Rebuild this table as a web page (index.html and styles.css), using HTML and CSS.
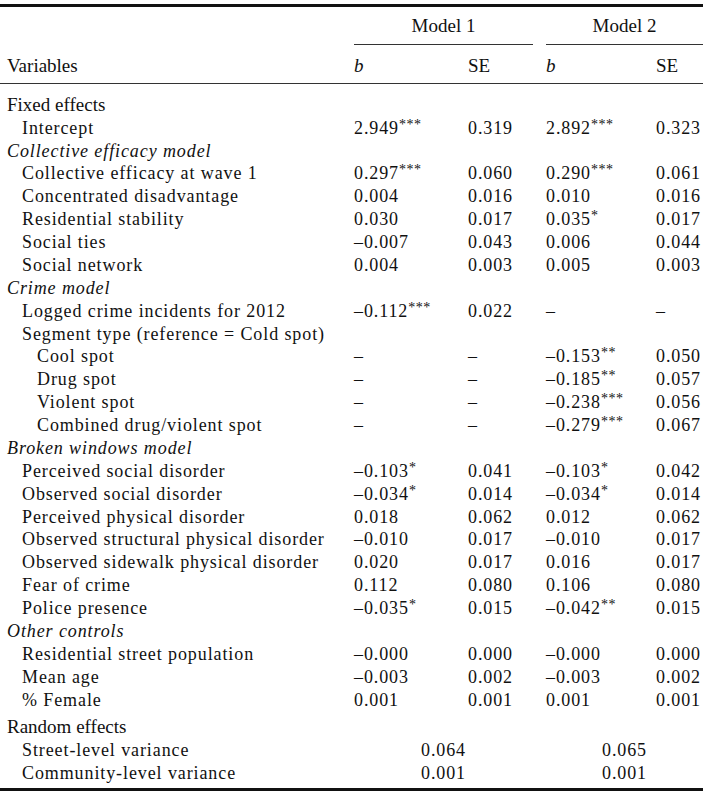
FILE: index.html
```html
<!DOCTYPE html>
<html lang="en">
<head>
    <meta charset="UTF-8">
    <meta name="viewport" content="width=device-width, initial-scale=1.0">
    <title>Multilevel models</title>
    <link rel="stylesheet" href="styles.css">
</head>
<body>
    <table class="results">
        <colgroup>
            <col class="c-var">
            <col class="c-b1">
            <col class="c-se1">
            <col class="c-b2">
            <col class="c-se2">
        </colgroup>
        <thead>
            <tr class="models">
                <th></th>
                <th colspan="2" class="m1"><div class="span-line">Model 1</div></th>
                <th colspan="2" class="m2"><div class="span-line">Model 2</div></th>
            </tr>
            <tr class="heads">
                <th class="var">Variables</th>
                <th><i>b</i></th>
                <th>SE</th>
                <th><i>b</i></th>
                <th>SE</th>
            </tr>
        </thead>
        <tbody>
            <tr class="first"><td class="group head">Fixed effects</td><td></td><td></td><td></td><td></td></tr>
            <tr><td class="ind">Intercept</td><td>2.949<sup>***</sup></td><td>0.319</td><td>2.892<sup>***</sup></td><td>0.323</td></tr>
            <tr><td class="group"><i>Collective efficacy model</i></td><td></td><td></td><td></td><td></td></tr>
            <tr><td class="ind">Collective efficacy at wave 1</td><td>0.297<sup>***</sup></td><td>0.060</td><td>0.290<sup>***</sup></td><td>0.061</td></tr>
            <tr><td class="ind">Concentrated disadvantage</td><td>0.004</td><td>0.016</td><td>0.010</td><td>0.016</td></tr>
            <tr><td class="ind">Residential stability</td><td>0.030</td><td>0.017</td><td>0.035<sup>*</sup></td><td>0.017</td></tr>
            <tr><td class="ind">Social ties</td><td>–0.007</td><td>0.043</td><td>0.006</td><td>0.044</td></tr>
            <tr><td class="ind">Social network</td><td>0.004</td><td>0.003</td><td>0.005</td><td>0.003</td></tr>
            <tr><td class="group"><i>Crime model</i></td><td></td><td></td><td></td><td></td></tr>
            <tr><td class="ind">Logged crime incidents for 2012</td><td>–0.112<sup>***</sup></td><td>0.022</td><td>–</td><td>–</td></tr>
            <tr><td class="ind">Segment type (reference = Cold spot)</td><td></td><td></td><td></td><td></td></tr>
            <tr><td class="ind2">Cool spot</td><td>–</td><td>–</td><td>–0.153<sup>**</sup></td><td>0.050</td></tr>
            <tr><td class="ind2">Drug spot</td><td>–</td><td>–</td><td>–0.185<sup>**</sup></td><td>0.057</td></tr>
            <tr><td class="ind2">Violent spot</td><td>–</td><td>–</td><td>–0.238<sup>***</sup></td><td>0.056</td></tr>
            <tr><td class="ind2">Combined drug/violent spot</td><td>–</td><td>–</td><td>–0.279<sup>***</sup></td><td>0.067</td></tr>
            <tr><td class="group"><i>Broken windows model</i></td><td></td><td></td><td></td><td></td></tr>
            <tr><td class="ind">Perceived social disorder</td><td>–0.103<sup>*</sup></td><td>0.041</td><td>–0.103<sup>*</sup></td><td>0.042</td></tr>
            <tr><td class="ind">Observed social disorder</td><td>–0.034<sup>*</sup></td><td>0.014</td><td>–0.034<sup>*</sup></td><td>0.014</td></tr>
            <tr><td class="ind">Perceived physical disorder</td><td>0.018</td><td>0.062</td><td>0.012</td><td>0.062</td></tr>
            <tr><td class="ind">Observed structural physical disorder</td><td>–0.010</td><td>0.017</td><td>–0.010</td><td>0.017</td></tr>
            <tr><td class="ind">Observed sidewalk physical disorder</td><td>0.020</td><td>0.017</td><td>0.016</td><td>0.017</td></tr>
            <tr><td class="ind">Fear of crime</td><td>0.112</td><td>0.080</td><td>0.106</td><td>0.080</td></tr>
            <tr><td class="ind">Police presence</td><td>–0.035<sup>*</sup></td><td>0.015</td><td>–0.042<sup>**</sup></td><td>0.015</td></tr>
            <tr><td class="group"><i>Other controls</i></td><td></td><td></td><td></td><td></td></tr>
            <tr><td class="ind">Residential street population</td><td>–0.000</td><td>0.000</td><td>–0.000</td><td>0.000</td></tr>
            <tr><td class="ind">Mean age</td><td>–0.003</td><td>0.002</td><td>–0.003</td><td>0.002</td></tr>
            <tr><td class="ind">% Female</td><td>0.001</td><td>0.001</td><td>0.001</td><td>0.001</td></tr>
            <tr class="random"><td class="group head">Random effects</td><td></td><td></td><td></td><td></td></tr>
            <tr><td class="ind">Street-level variance</td><td colspan="2" class="var1">0.064</td><td colspan="2" class="var2">0.065</td></tr>
            <tr class="last"><td class="ind">Community-level variance</td><td colspan="2" class="var1">0.001</td><td colspan="2" class="var2">0.001</td></tr>
        </tbody>
    </table>
</body>
</html>
```

FILE: styles.css
```css
body {
    margin: 0;
    padding-top: 4px;
    background: #fff;
    color: #111;
    font-family: "Liberation Serif", "Times New Roman", serif;
    font-size: 18px;
    letter-spacing: 0.9px;
}

.results {
    width: 703px;
    border-collapse: separate;
    border-spacing: 0;
    table-layout: fixed;
    border-top: 3px solid #111;
    border-bottom: 3px solid #111;
}

.c-var { width: 354px; }
.c-b1 { width: 114px; }
.c-se1 { width: 78px; }
.c-b2 { width: 110px; }
.c-se2 { width: 47px; }

th, td {
    padding: 0;
    text-align: left;
    font-weight: normal;
    line-height: 22.88px;
    white-space: nowrap;
}

/* header labels are set tighter than the body */
th,
td.head {
    font-size: 19px;
    letter-spacing: 0;
}

.models th {
    padding-top: 8px;
    text-align: center;
}

.span-line {
    padding-bottom: 6px;
    border-bottom: 1px solid #333;
}

.m1 .span-line { margin-right: 13px; }

.heads th {
    padding: 10px 0 5px;
    border-bottom: 1px solid #333;
}

.heads th.var,
td.group { padding-left: 7px; }

td.ind { padding-left: 22px; }
td.ind2 { padding-left: 37px; }

.first td { padding-top: 10px; }
.random td { padding-top: 5px; }
.last td { padding-bottom: 3px; }

sup {
    font-size: 14px;
    letter-spacing: 0.5px;
    line-height: 0;
    vertical-align: 5px;
}

.var1 {
    text-align: center;
    padding-right: 13px;
}

.var2 { text-align: center; }
```
